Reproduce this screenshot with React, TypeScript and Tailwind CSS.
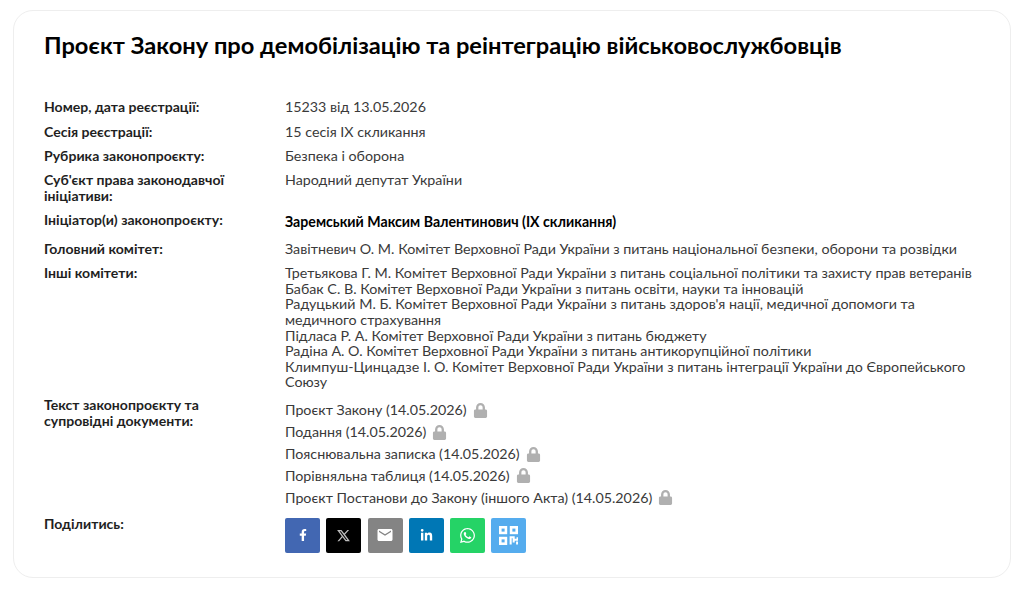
import React from "react";
import { FaFacebookF, FaLinkedinIn, FaWhatsapp, FaLock } from "react-icons/fa";
import { RiTwitterXLine } from "react-icons/ri";
import { MdEmail } from "react-icons/md";

const otherCommittees = [
  "Третьякова Г. М. Комітет Верховної Ради України з питань соціальної політики та захисту прав ветеранів",
  "Бабак С. В. Комітет Верховної Ради України з питань освіти, науки та інновацій",
  "Радуцький М. Б. Комітет Верховної Ради України з питань здоров'я нації, медичної допомоги та медичного страхування",
  "Підласа Р. А. Комітет Верховної Ради України з питань бюджету",
  "Радіна А. О. Комітет Верховної Ради України з питань антикорупційної політики",
  "Климпуш-Цинцадзе І. О. Комітет Верховної Ради України з питань інтеграції України до Європейського Союзу",
];

const documents = [
  "Проєкт Закону (14.05.2026)",
  "Подання (14.05.2026)",
  "Пояснювальна записка (14.05.2026)",
  "Порівняльна таблиця (14.05.2026)",
  "Проєкт Постанови до Закону (іншого Акта) (14.05.2026)",
];

const QrIcon = () => (
  <svg width="19" height="19" viewBox="0 0 22 22" fill="none" stroke="currentColor">
    <rect x="1.5" y="1.5" width="6.5" height="6.5" strokeWidth="3" />
    <rect x="14" y="1.5" width="6.5" height="6.5" strokeWidth="3" />
    <rect x="1.5" y="14" width="6.5" height="6.5" strokeWidth="3" />
    <path d="M13.5 21.5v-8.5h3.5v3h4.5v-3M17 16v3M21 18v3.5" strokeWidth="2.4" />
  </svg>
);

const shareButtons = [
  { bg: "bg-[#4267b2]", icon: <FaFacebookF size={12} /> },
  { bg: "bg-black", icon: <RiTwitterXLine size={15} className="text-[#bdbdbd]" /> },
  { bg: "bg-[#848484]", icon: <MdEmail size={18} /> },
  { bg: "bg-[#0077b5]", icon: <FaLinkedinIn size={13} /> },
  { bg: "bg-[#25d366]", icon: <FaWhatsapp size={17} /> },
  { bg: "bg-[#55acee]", icon: <QrIcon /> },
];

const Row = ({ label, labelClass = "", children }: { label: string; labelClass?: string; children: React.ReactNode }) => (
  <div className="flex">
    <div className={`w-[241px] shrink-0 pr-4 text-[14.05px] font-bold text-[#1f1f1f] ${labelClass}`}>{label}</div>
    <div className="flex-1 text-[#3a3a3a]">{children}</div>
  </div>
);

export default function App() {
  return (
    <div className="min-h-[591px] bg-white px-[13px] pt-[10px] font-['Lato','Noto_Sans',sans-serif]">
      <div className="h-[568px] rounded-[20px] border border-[#eeeeee] px-[30px] pt-[18px] text-[14.27px] leading-[15.6px]">
        <h1 className="text-[23.65px] leading-[32px] font-bold text-black">
          Проєкт Закону про демобілізацію та реінтеграцію військовослужбовців
        </h1>
        <div className="mt-[38.2px] flex flex-col gap-[8.8px]">
          <Row label="Номер, дата реєстрації:">15233 від 13.05.2026</Row>
          <Row label="Сесія реєстрації:">15 сесія IX скликання</Row>
          <Row label="Рубрика законопроєкту:">Безпека і оборона</Row>
          <Row label="Суб'єкт права законодавчої ініціативи:">Народний депутат України</Row>
          <Row label="Ініціатор(и) законопроєкту:">
            <div className="pt-[2px] pb-[2px] text-[14.15px] font-bold text-black">Заремський Максим Валентинович (IX скликання)</div>
          </Row>
          <Row label="Головний комітет:">
            Завітневич О. М. Комітет Верховної Ради України з питань національної безпеки, оборони та розвідки
          </Row>
          <Row label="Інші комітети:">
            <div className="-mb-[1.4px]">
              {otherCommittees.map((c) => (
                <div key={c}>{c}</div>
              ))}
            </div>
          </Row>
          <Row label="Текст законопроєкту та супровідні документи:">
            <div className="flex flex-col pt-[2px]">
              {documents.map((d) => (
                <div key={d} className="flex h-[21.9px] items-center gap-[6px]">
                  {d}
                  <FaLock size={15} className="text-[#b0b0b0]" />
                </div>
              ))}
            </div>
          </Row>
          <Row label="Поділитись:" labelClass="leading-[12.6px]">
            <div className="flex gap-[6.3px]">
              {shareButtons.map((b, i) => (
                <div key={i} className={`flex h-[35px] w-[35px] items-center justify-center rounded-[2px] text-white ${b.bg}`}>
                  {b.icon}
                </div>
              ))}
            </div>
          </Row>
        </div>
      </div>
    </div>
  );
}
